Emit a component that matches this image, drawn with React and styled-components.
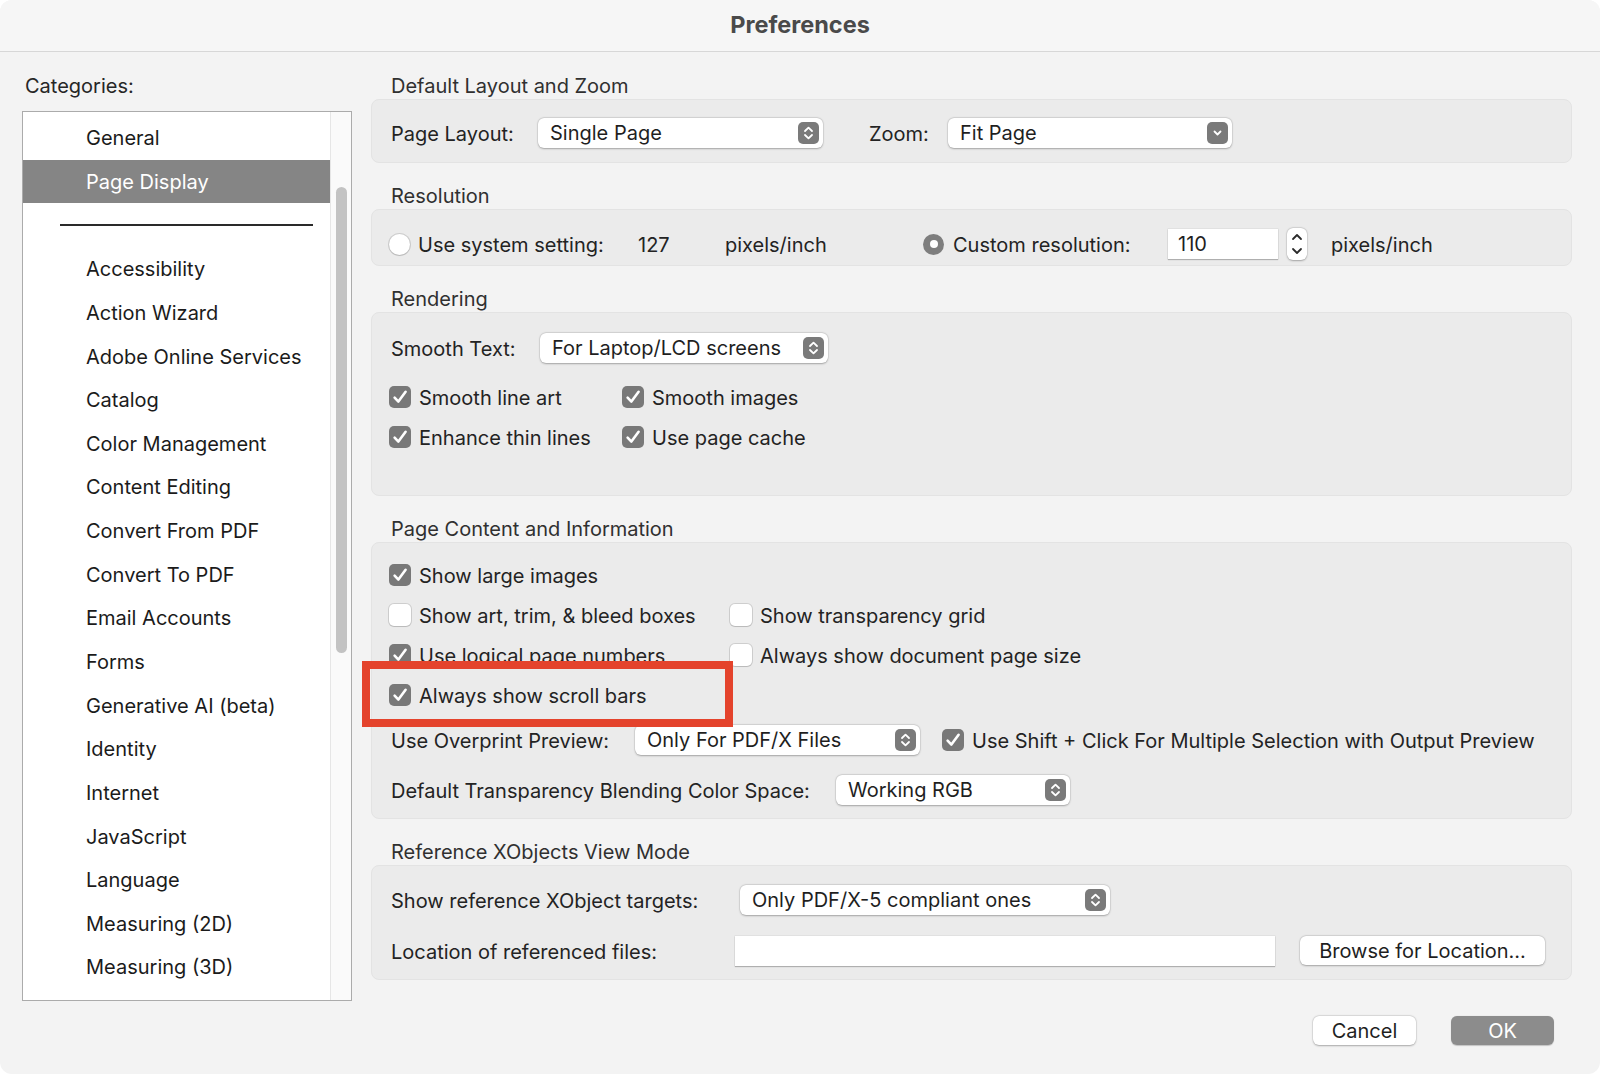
import React from "react";
import styled, { createGlobalStyle } from "styled-components";

const GlobalStyle = createGlobalStyle`
  html, body { margin: 0; padding: 0; background: #ffffff; }
  body {
    font-family: Inter, "Noto Sans", "Liberation Sans", sans-serif;
    -webkit-font-smoothing: antialiased;
  }
  * { box-sizing: border-box; }
`;

const Dialog = styled.div`
  width: 1600px;
  height: 1074px;
  background: #f3f3f3;
  border-radius: 12px;
  overflow: hidden;
  display: flex;
  flex-direction: column;
`;

const TitleBar = styled.div`
  height: 52px;
  flex: none;
  display: flex;
  align-items: center;
  justify-content: center;
  background: #f6f6f6;
  border-bottom: 1px solid #d7d7d7;
  font-size: 23.5px;
  font-weight: 700;
  color: #4a4a4a;
  padding-bottom: 2px;
`;

const Body = styled.div`
  flex: 1;
  display: flex;
  gap: 19px;
  padding: 21px 28px 0 22px;
`;

const LeftColumn = styled.div`
  width: 330px;
  flex: none;
  display: flex;
  flex-direction: column;
`;

const CategoriesLabel = styled.div`
  height: 24px;
  line-height: 22px;
  padding-top: 2px;
  font-size: 20px;
  color: #262626;
  padding-left: 3px;
  margin-bottom: 14px;
`;

const ListBox = styled.div`
  height: 890px;
  background: #ffffff;
  border: 1px solid #ababab;
  display: flex;
`;

const ItemsColumn = styled.div`
  flex: 1;
  padding-top: 4px;
  display: flex;
  flex-direction: column;
`;

const Item = styled.div`
  height: 43.65px;
  flex: none;
  display: flex;
  align-items: center;
  padding-left: 63px;
  padding-top: 1px;
  font-size: 20px;
  color: ${(p) => (p.$selected ? "#ffffff" : "#1b1b1b")};
  background: ${(p) => (p.$selected ? "#858585" : "transparent")};
`;

const DividerRow = styled.div`
  height: 43.65px;
  flex: none;
  display: flex;
  align-items: center;
  padding: 0 17px 0 37px;
`;

const DividerLine = styled.div`
  flex: 1;
  height: 2px;
  background: #2a2a2a;
`;

const ScrollTrack = styled.div`
  width: 21px;
  flex: none;
  background: #fafafa;
  border-left: 1px solid #e6e6e6;
  display: flex;
  justify-content: center;
  padding-top: 75px;
`;

const ScrollThumb = styled.div`
  width: 11px;
  height: 466px;
  border-radius: 6px;
  background: #c3c3c3;
`;

const RightColumn = styled.div`
  flex: 1;
  display: flex;
  flex-direction: column;
`;

const Section = styled.section`
  margin-bottom: 20px;
  &:last-of-type { margin-bottom: 0; }
`;

const SectionTitle = styled.div`
  height: 24px;
  line-height: 22px;
  padding-top: 2px;
  margin-bottom: 2px;
  padding-left: 20px;
  font-size: 20px;
  color: #303030;
`;

const Panel = styled.div`
  position: relative;
  height: ${(p) => p.$h}px;
  padding: ${(p) => p.$pt}px 19px 0 19px;
  background: #ebebeb;
  border: 1px solid #e3e3e3;
  border-radius: 8px;
`;

const Row = styled.div`
  height: ${(p) => p.$h || 40}px;
  display: flex;
  align-items: center;
  margin-top: ${(p) => p.$mt || 0}px;
`;

const Label = styled.span`
  flex: none;
  width: ${(p) => (p.$w ? `${p.$w}px` : "auto")};
  margin-left: ${(p) => p.$ml || 0}px;
  font-size: 20px;
  color: #232323;
  white-space: nowrap;
  padding-top: 2px;
`;

const SelectBox = styled.div`
  flex: none;
  width: ${(p) => p.$w}px;
  height: 30px;
  margin-left: ${(p) => p.$ml || 0}px;
  background: #ffffff;
  border-radius: 6px;
  box-shadow: 0 0.5px 2px rgba(0, 0, 0, 0.28), 0 0 0 0.5px rgba(0, 0, 0, 0.08);
  display: flex;
  align-items: center;
  justify-content: space-between;
  padding: 0 4px 0 12px;
  font-size: 20px;
  color: #1f1f1f;
  white-space: nowrap;
`;

const ArrowBox = styled.div`
  width: 21px;
  height: 22px;
  border-radius: 5px;
  background: #7a7a7a;
  display: flex;
  align-items: center;
  justify-content: center;
`;

const TextInput = styled.div`
  flex: none;
  width: ${(p) => p.$w}px;
  height: 30px;
  margin-left: ${(p) => p.$ml || 0}px;
  background: #ffffff;
  box-shadow: 0 1px 1px rgba(0, 0, 0, 0.22), 0 0 0 0.5px rgba(0, 0, 0, 0.08);
  display: flex;
  align-items: center;
  padding-left: 10px;
  font-size: 20px;
  color: #1f1f1f;
`;

const Stepper = styled.div`
  flex: none;
  width: 20px;
  height: 32px;
  margin-left: 9px;
  background: #ffffff;
  border-radius: 6px;
  box-shadow: 0 0.5px 2px rgba(0, 0, 0, 0.28), 0 0 0 0.5px rgba(0, 0, 0, 0.08);
  display: flex;
  align-items: center;
  justify-content: center;
`;

const RadioDot = styled.span`
  flex: none;
  width: 21px;
  height: 21px;
  border-radius: 50%;
  margin-left: ${(p) => p.$ml || 0}px;
  margin-right: ${(p) => p.$mr || 8}px;
  display: flex;
  align-items: center;
  justify-content: center;
  background: ${(p) => (p.$on ? "#7e7e7e" : "#ffffff")};
  box-shadow: ${(p) =>
    p.$on
      ? "none"
      : "0 0 0 1px rgba(0,0,0,0.13), 0 1px 1px rgba(0,0,0,0.1)"};
  &::after {
    content: "";
    display: ${(p) => (p.$on ? "block" : "none")};
    width: 8px;
    height: 8px;
    border-radius: 50%;
    background: #ffffff;
  }
`;

const CheckGrid = styled.div`
  display: grid;
  grid-template-columns: ${(p) => p.$cols};
  grid-auto-rows: 40px;
  margin-top: ${(p) => p.$mt || 0}px;
`;

const CheckItem = styled.label`
  display: flex;
  align-items: center;
  margin-left: ${(p) => p.$ml ?? -2}px;
  font-size: 20px;
  color: #232323;
  white-space: nowrap;
`;

const CheckText = styled.span`
  padding-top: 2px;
`;

const Box = styled.span`
  flex: none;
  width: 22px;
  height: 22px;
  border-radius: 5px;
  margin-right: 8px;
  display: flex;
  align-items: center;
  justify-content: center;
  background: ${(p) => (p.$on ? "#787878" : "#ffffff")};
  box-shadow: ${(p) =>
    p.$on
      ? "none"
      : "0 0 0 1px rgba(0,0,0,0.12), 0 1px 1px rgba(0,0,0,0.1)"};
`;

const Footer = styled.div`
  display: flex;
  justify-content: flex-end;
  gap: 35px;
  margin-top: 36px;
  padding-right: 18px;
`;

const Button = styled.button`
  flex: none;
  width: ${(p) => p.$w || 103}px;
  height: 29px;
  margin-left: ${(p) => p.$ml || 0}px;
  border: none;
  border-radius: 6px;
  font-family: inherit;
  font-size: 20px;
  color: ${(p) => (p.$primary ? "#ffffff" : "#1f1f1f")};
  background: ${(p) => (p.$primary ? "#8c8c8c" : "#ffffff")};
  box-shadow: ${(p) =>
    p.$primary
      ? "0 0.5px 1px rgba(0,0,0,0.2)"
      : "0 0.5px 2px rgba(0,0,0,0.28), 0 0 0 0.5px rgba(0,0,0,0.08)"};
  padding: 0;
`;

const Highlight = styled.div`
  position: absolute;
  left: -10px;
  top: 118px;
  width: 371px;
  height: 66px;
  border: 8px solid #e4432c;
  pointer-events: none;
`;

const UpDown = () => (
  <svg width="21" height="22" viewBox="0 0 21 22">
    <path
      d="M7 9 L10.5 5.6 L14 9 M7 13 L10.5 16.4 L14 13"
      fill="none"
      stroke="#ffffff"
      strokeWidth="1.8"
      strokeLinecap="round"
      strokeLinejoin="round"
    />
  </svg>
);

const Down = () => (
  <svg width="21" height="22" viewBox="0 0 21 22">
    <path
      d="M7.5 9.5 L10.5 12.5 L13.5 9.5"
      fill="none"
      stroke="#ffffff"
      strokeWidth="1.8"
      strokeLinecap="round"
      strokeLinejoin="round"
    />
  </svg>
);

const StepIcon = () => (
  <svg width="20" height="32" viewBox="0 0 20 32">
    <path
      d="M6 11 L10 7 L14 11 M6 21 L10 25 L14 21"
      fill="none"
      stroke="#2a2a2a"
      strokeWidth="1.8"
      strokeLinecap="round"
      strokeLinejoin="round"
    />
  </svg>
);

const Tick = () => (
  <svg width="22" height="22" viewBox="0 0 22 22">
    <path
      d="M5.6 11.6 L9.4 15.6 L16.6 5.8"
      fill="none"
      stroke="#ffffff"
      strokeWidth="2.6"
      strokeLinecap="round"
      strokeLinejoin="round"
    />
  </svg>
);

const Select = ({ w, ml, value, combo }) => (
  <SelectBox $w={w} $ml={ml}>
    <span>{value}</span>
    <ArrowBox>{combo ? <Down /> : <UpDown />}</ArrowBox>
  </SelectBox>
);

const Check = ({ on, children, ml }) => (
  <CheckItem $ml={ml}>
    <Box $on={on}>{on && <Tick />}</Box>
    <CheckText>{children}</CheckText>
  </CheckItem>
);

const categoriesTop = ["General", "Page Display"];
const categories = [
  "Accessibility",
  "Action Wizard",
  "Adobe Online Services",
  "Catalog",
  "Color Management",
  "Content Editing",
  "Convert From PDF",
  "Convert To PDF",
  "Email Accounts",
  "Forms",
  "Generative AI (beta)",
  "Identity",
  "Internet",
  "JavaScript",
  "Language",
  "Measuring (2D)",
  "Measuring (3D)",
];

export default function App() {
  return (
    <>
      <GlobalStyle />
      <Dialog>
        <TitleBar>Preferences</TitleBar>
        <Body>
          <LeftColumn>
            <CategoriesLabel>Categories:</CategoriesLabel>
            <ListBox>
              <ItemsColumn>
                {categoriesTop.map((c) => (
                  <Item key={c} $selected={c === "Page Display"}>
                    {c}
                  </Item>
                ))}
                <DividerRow>
                  <DividerLine />
                </DividerRow>
                {categories.map((c) => (
                  <Item key={c}>{c}</Item>
                ))}
              </ItemsColumn>
              <ScrollTrack>
                <ScrollThumb />
              </ScrollTrack>
            </ListBox>
          </LeftColumn>

          <RightColumn>
            <Section>
              <SectionTitle>Default Layout and Zoom</SectionTitle>
              <Panel $h={64} $pt={8}>
                <Row $h={50}>
                  <Label $w={147}>Page Layout:</Label>
                  <Select w={285} value="Single Page" />
                  <Label $w={79} $ml={46}>
                    Zoom:
                  </Label>
                  <Select w={284} value="Fit Page" combo />
                </Row>
              </Panel>
            </Section>

            <Section>
              <SectionTitle>Resolution</SectionTitle>
              <Panel $h={57} $pt={14}>
                <Row $h={40}>
                  <RadioDot $ml={-2} />
                  <Label $w={220}>Use system setting:</Label>
                  <Label $w={87}>127</Label>
                  <Label $w={198}>pixels/inch</Label>
                  <RadioDot $on $mr={9} />
                  <Label $w={215}>Custom resolution:</Label>
                  <TextInput $w={110}>110</TextInput>
                  <Stepper>
                    <StepIcon />
                  </Stepper>
                  <Label $ml={24}>pixels/inch</Label>
                </Row>
              </Panel>
            </Section>

            <Section>
              <SectionTitle>Rendering</SectionTitle>
              <Panel $h={184} $pt={10}>
                <Row $h={50}>
                  <Label $w={149}>Smooth Text:</Label>
                  <Select w={288} value="For Laptop/LCD screens" />
                </Row>
                <CheckGrid $cols="233px auto" $mt={4}>
                  <Check on>Smooth line art</Check>
                  <Check on>Smooth images</Check>
                  <Check on>Enhance thin lines</Check>
                  <Check on>Use page cache</Check>
                </CheckGrid>
              </Panel>
            </Section>

            <Section>
              <SectionTitle>Page Content and Information</SectionTitle>
              <Panel $h={277} $pt={12}>
                <CheckGrid $cols="341px auto">
                  <Check on>Show large images</Check>
                  <span />
                  <Check>Show art, trim, &amp; bleed boxes</Check>
                  <Check>Show transparency grid</Check>
                  <Check on>Use logical page numbers</Check>
                  <Check>Always show document page size</Check>
                  <Check on>Always show scroll bars</Check>
                  <span />
                </CheckGrid>
                <Row $h={50}>
                  <Label $w={244}>Use Overprint Preview:</Label>
                  <Select w={285} value="Only For PDF/X Files" />
                  <Check on ml={22}>
                    Use Shift + Click For Multiple Selection with Output Preview
                  </Check>
                </Row>
                <Row $h={50}>
                  <Label $w={445}>Default Transparency Blending Color Space:</Label>
                  <Select w={234} value="Working RGB" />
                </Row>
                <Highlight />
              </Panel>
            </Section>

            <Section>
              <SectionTitle>Reference XObjects View Mode</SectionTitle>
              <Panel $h={115} $pt={8}>
                <Row $h={51}>
                  <Label $w={349}>Show reference XObject targets:</Label>
                  <Select w={370} value="Only PDF/X-5 compliant ones" />
                </Row>
                <Row $h={51}>
                  <Label $w={344}>Location of referenced files:</Label>
                  <TextInput $w={540} />
                  <Button $w={245} $ml={25}>
                    Browse for Location...
                  </Button>
                </Row>
              </Panel>
            </Section>

            <Footer>
              <Button>Cancel</Button>
              <Button $primary>OK</Button>
            </Footer>
          </RightColumn>
        </Body>
      </Dialog>
    </>
  );
}
